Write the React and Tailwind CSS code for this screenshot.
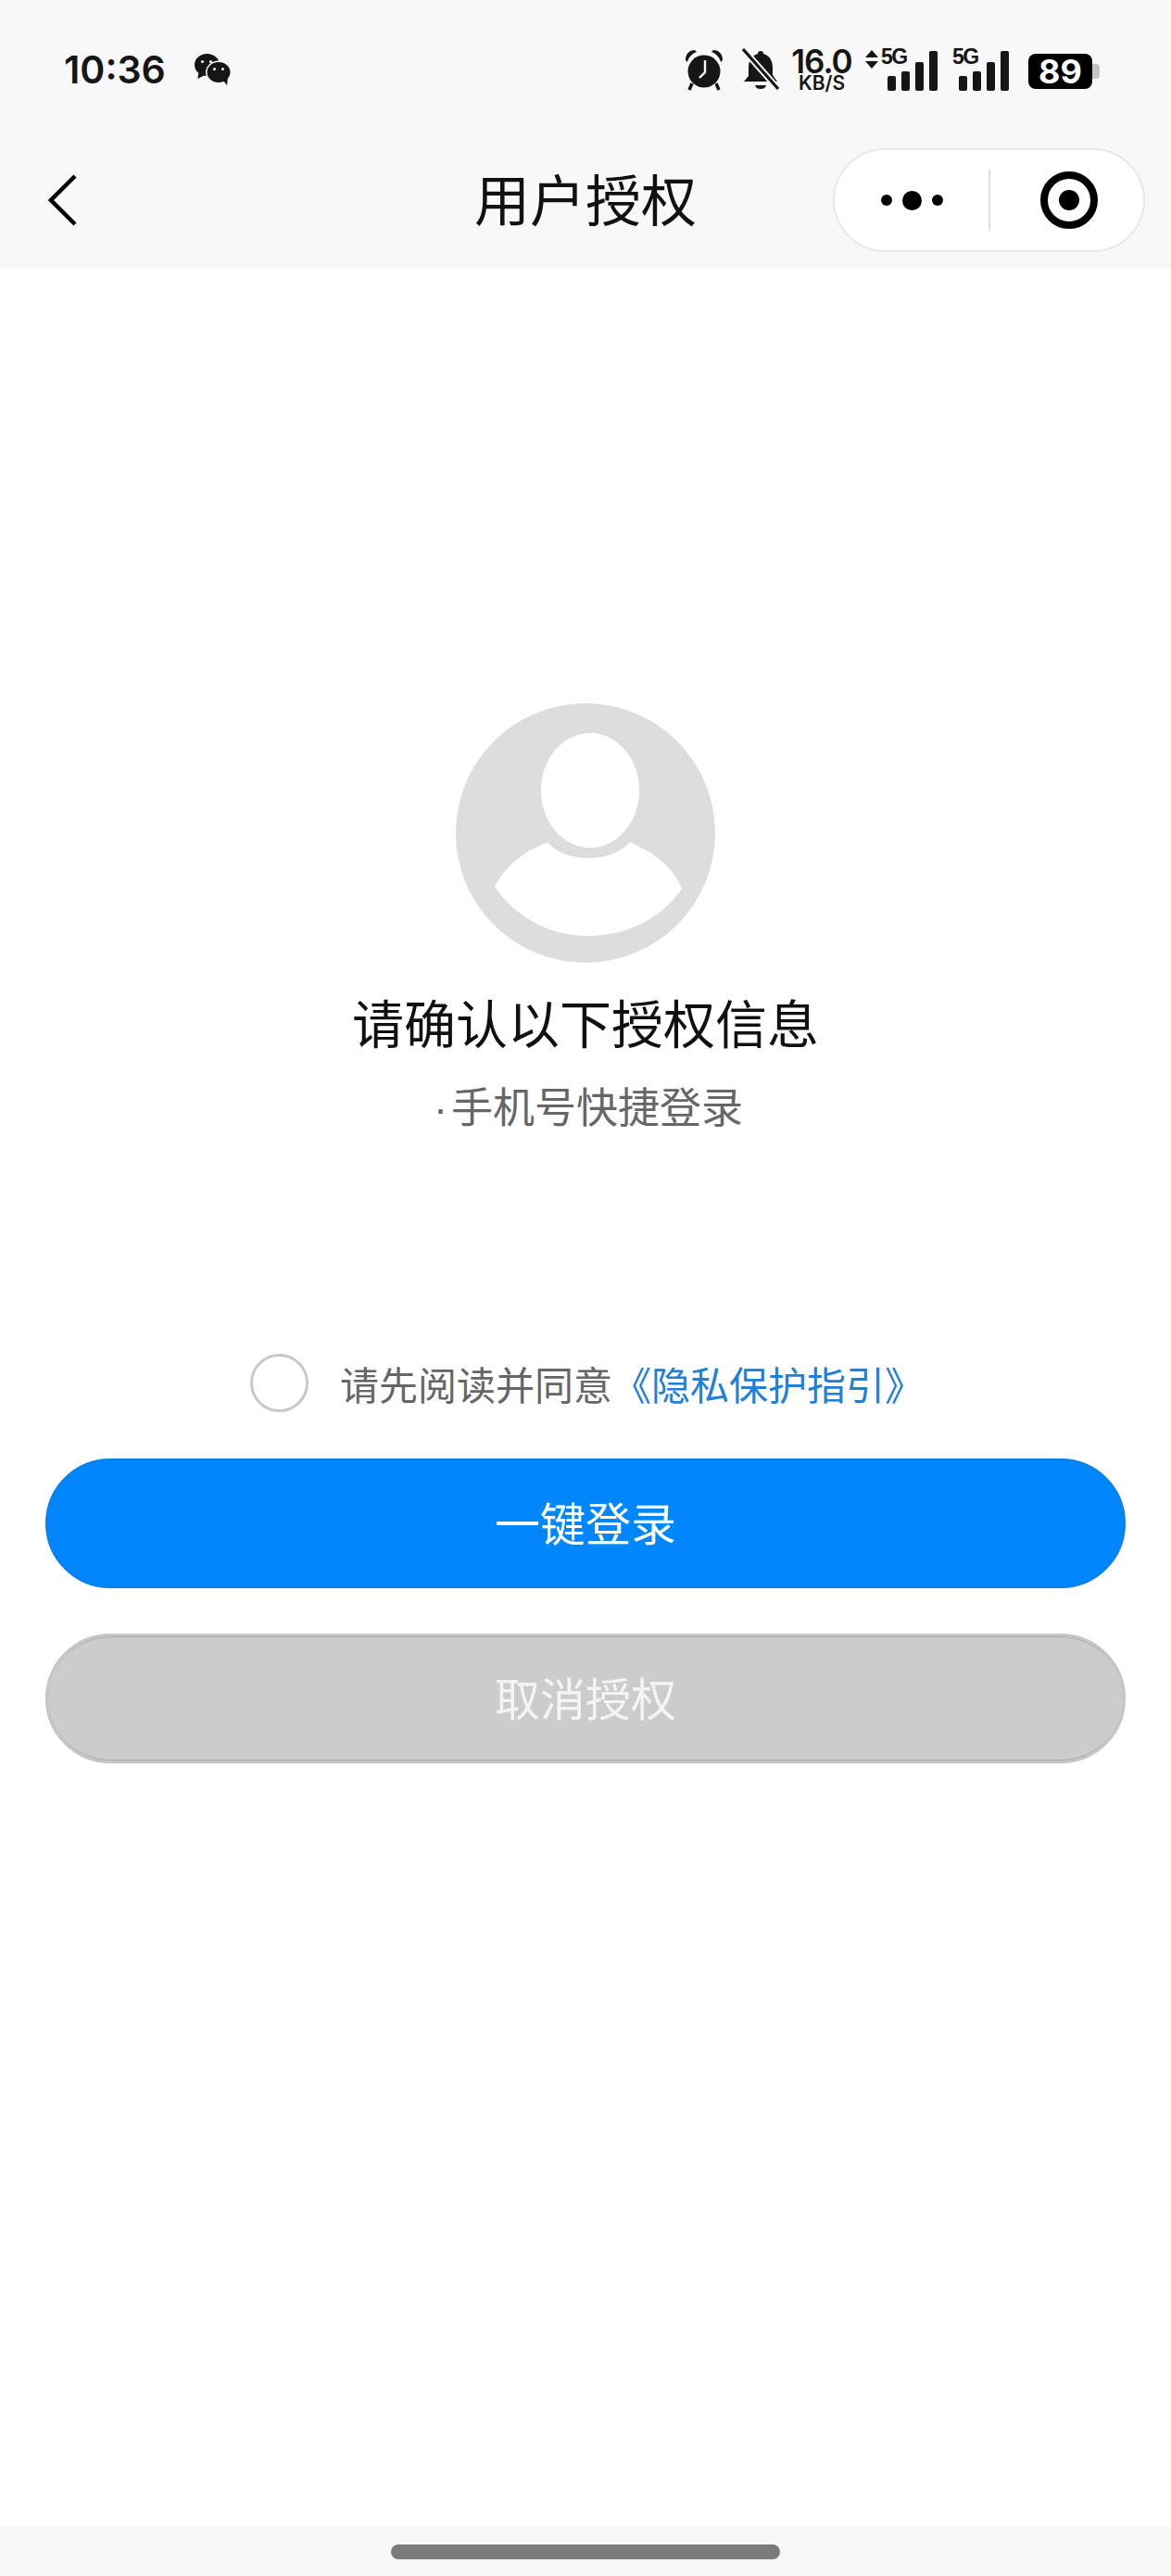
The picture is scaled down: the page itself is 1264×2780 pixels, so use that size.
const CJK = "font-['Noto_Sans_CJK_SC','Noto_Sans',sans-serif]";

function WechatIcon() {
  return (
    <svg width="42" height="36" viewBox="0 0 42 36" className="ml-[29px]">
      <ellipse cx="15.5" cy="13" rx="13.5" ry="12" fill="#161616" />
      <path d="M6 22 L5.5 28 L13 24 Z" fill="#161616" />
      <circle cx="10.5" cy="9.5" r="1.6" fill="#f8f8f8" />
      <circle cx="19.5" cy="9.5" r="1.6" fill="#f8f8f8" />
      <ellipse cx="28" cy="21" rx="14" ry="12.5" fill="#f8f8f8" />
      <ellipse cx="28" cy="21" rx="12.5" ry="11" fill="#161616" />
      <path d="M33 30 L37 35 L38 26 Z" fill="#161616" />
      <circle cx="23.5" cy="17.5" r="1.5" fill="#f8f8f8" />
      <circle cx="32.5" cy="17.5" r="1.5" fill="#f8f8f8" />
    </svg>
  );
}

function AlarmIcon() {
  return (
    <svg width="44" height="48" viewBox="0 0 44 48">
      <circle cx="22" cy="26" r="17.5" fill="#161616" />
      <path d="M2 14 C2 7 6 3 12 3 L14 5 C9 7 5 11 4 16 Z" fill="#161616" />
      <path d="M42 14 C42 7 38 3 32 3 L30 5 C35 7 39 11 40 16 Z" fill="#161616" />
      <path d="M9 39 L6 46 M35 39 L38 46" stroke="#161616" strokeWidth="3.5" />
      <path d="M23 14 V27 L17 33" stroke="#f8f8f8" strokeWidth="2.4" fill="none" />
    </svg>
  );
}

function BellOffIcon() {
  return (
    <svg width="42" height="46" viewBox="0 0 42 46" className="ml-[18px]">
      <path d="M21 3 C23 3 24 4 24 6 C31 8 34 14 34 21 L34 29 L39 36 L3 36 L8 30 L8 21 C8 14 11 8 18 6 C18 4 19 3 21 3 Z" fill="#161616" />
      <path d="M15 40 H27 C26 43 24 44 21 44 C18 44 16 43 15 40 Z" fill="#161616" />
      <path d="M2 1 L40 44" stroke="#f8f8f8" strokeWidth="7" />
      <path d="M2 1 L40 44" stroke="#161616" strokeWidth="3.2" />
    </svg>
  );
}

function SignalIcon() {
  return (
    <div className="relative w-[62px] h-[46px]">
      <span className="absolute left-0 top-[-3px] text-[23px] leading-[24px] font-bold tracking-[-1.5px] text-[#161616] font-['Liberation_Sans',sans-serif]">
        5G
      </span>
      <div className="absolute left-[7px] bottom-0 flex items-end gap-[6px]">
        <div className="w-[9px] h-[16px] rounded-[2px] bg-[#161616]" />
        <div className="w-[9px] h-[21px] rounded-[2px] bg-[#161616]" />
        <div className="w-[9px] h-[31px] rounded-[2px] bg-[#161616]" />
        <div className="w-[9px] h-[43px] rounded-[2px] bg-[#161616]" />
      </div>
    </div>
  );
}

function StatusBar() {
  return (
    <div className="flex items-center h-[150px] pl-[69px] pr-[77px]">
      <span className="text-[41px] leading-none font-semibold text-[#161616] font-['Inter',sans-serif]">
        10:36
      </span>
      <WechatIcon />
      <div className="ml-auto flex items-center">
        <AlarmIcon />
        <BellOffIcon />
        <div className="ml-[11px] w-[68px] flex flex-col items-center font-['Inter',sans-serif] text-[#161616]">
          <span className="text-[35px] leading-[29px] font-semibold tracking-[-1px]">16.0</span>
          <span className="text-[21px] leading-[18px] font-semibold">KB/S</span>
        </div>
        <svg width="14" height="20" viewBox="0 0 14 20" className="ml-[13px] mb-[22px]">
          <path d="M7 0 L14 8 H0 Z M7 20 L14 12 H0 Z" fill="#161616" />
        </svg>
        <div className="ml-[3px]">
          <SignalIcon />
        </div>
        <div className="ml-[15px]">
          <SignalIcon />
        </div>
        <div className="ml-[20px] mt-[3px] flex items-center">
          <div className="w-[69px] h-[38px] rounded-[8px] bg-black flex items-center justify-center">
            <span className="text-[36px] leading-none font-bold text-white font-['Inter',sans-serif]">89</span>
          </div>
          <div className="w-[8px] h-[16px] rounded-r-[4px] bg-[#c4c4c4]" />
        </div>
      </div>
    </div>
  );
}

function NavBar() {
  return (
    <div className="grid grid-cols-[1fr_auto_1fr] items-center h-[140px] pb-[8px]">
      <div className="pl-[52px]">
        <svg width="32" height="56" viewBox="0 0 32 56" className="block">
          <path d="M29 2 L3 28 L29 54" fill="none" stroke="#000" strokeWidth="4.5" />
        </svg>
      </div>
      <h1 className={`mb-[6px] text-[60px] leading-none font-normal text-[#111] ${CJK}`}>用户授权</h1>
      <div className="flex justify-end pr-[28px]">
        <div className="flex items-center w-[337px] h-[112px] rounded-full bg-white border-2 border-[#e8e8e8]">
          <div className="w-[166px] flex items-center justify-center gap-[11px]">
            <div className="w-[12px] h-[12px] rounded-full bg-black" />
            <div className="w-[21px] h-[21px] rounded-full bg-black" />
            <div className="w-[12px] h-[12px] rounded-full bg-black" />
          </div>
          <div className="w-[2px] h-[66px] bg-[#dedede]" />
          <div className="flex-1 flex items-center justify-center pl-[4px]">
            <div className="w-[62px] h-[62px] rounded-full border-[8px] border-black flex items-center justify-center">
              <div className="w-[22px] h-[22px] rounded-full bg-black" />
            </div>
          </div>
        </div>
      </div>
    </div>
  );
}

function Avatar() {
  return (
    <svg width="280" height="280" viewBox="0 0 280 280">
      <circle cx="140" cy="140" r="140" fill="#dddddd" />
      <ellipse cx="145" cy="94" rx="53" ry="62" fill="#fff" />
      <path
        d="M42 198 C55 172 78 158 99 150 C110 162 125 167 143 167 C161 167 176 162 188 150 C212 160 234 175 244 200 C222 232 186 251 143 251 C100 251 64 230 42 198 Z"
        fill="#fff"
      />
    </svg>
  );
}

export default function App() {
  return (
    <div className={`h-[2780px] flex flex-col bg-white ${CJK}`}>
      <div className="bg-[#f8f8f8]">
        <StatusBar />
        <NavBar />
      </div>

      <div className="flex-1 flex flex-col items-center pt-[469px]">
        <Avatar />
        <p className="mt-[28px] text-[56px] leading-[70px] text-[#111]">请确认以下授权信息</p>
        <p className="mt-[25px] pl-[6px] text-[45px] leading-[62px] text-[#666]">
          <span className="mr-[4px] font-['Liberation_Sans',sans-serif]">·</span>手机号快捷登录
        </p>

        <div className="mt-[233px] flex items-center pl-[3px]">
          <div className="w-[63px] h-[63px] rounded-full border-[3px] border-[#c8c8c8]" />
          <p className="ml-[34px] text-[42px] leading-[60px] text-[#666] whitespace-nowrap">
            请先阅读并同意
            <span className="text-[#1f80d8]">《隐私保护指引》</span>
          </p>
        </div>

        <button className="mt-[50px] w-[1166px] h-[140px] pb-[4px] rounded-full bg-[#0087fe] border-2 border-[#0a80ea] text-[49px] text-white">
          一键登录
        </button>
        <button className="mt-[49px] w-[1166px] h-[140px] pb-[4px] rounded-full bg-[#cccccc] border-[3px] border-[#c5c5c5] shadow-[inset_0_3px_1px_-2px_#a8a8a8,inset_0_-3px_1px_-2px_#a8a8a8] text-[49px] text-[#f4f4f4]">
          取消授权
        </button>
      </div>

      <div className="h-[54px] bg-[#f7f7f7] flex justify-center pt-[20px]">
        <div className="w-[420px] h-[16px] rounded-full bg-[#7b7b7b]" />
      </div>
    </div>
  );
}
